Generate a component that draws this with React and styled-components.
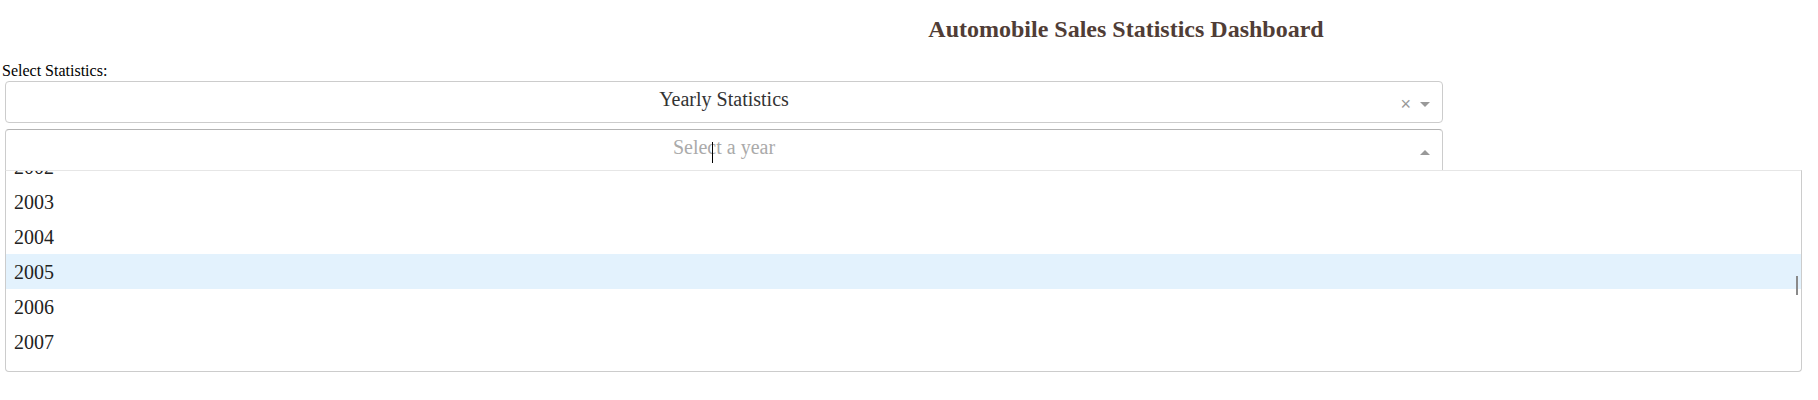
import React, { useLayoutEffect, useRef } from 'react';
import styled, { createGlobalStyle } from 'styled-components';

const GlobalStyle = createGlobalStyle`
  body {
    margin: 0;
    background: #fff;
    font-family: "Liberation Serif", "Times New Roman", serif;
  }
`;

const Page = styled.div`
  display: flex;
  flex-direction: column;
  align-items: flex-start;
`;

const Title = styled.h1`
  align-self: stretch;
  margin: 0;
  padding: 15px 0 0 434px;
  text-align: center;
  font-size: 24px;
  line-height: 28px;
  font-weight: bold;
  color: #503D36;
`;

const Label = styled.label`
  display: block;
  margin-top: 19px;
  padding-left: 2px;
  font-size: 16px;
  line-height: 18px;
  color: #000;
`;

const Control = styled.div`
  display: grid;
  grid-template-columns: 1fr auto;
  box-sizing: border-box;
  width: 1438px;
  height: 42px;
  margin: ${(p) => p.$mt}px 0 0 5px;
  border: 1px solid #ccc;
  border-color: ${(p) => (p.$open ? '#b3b3b3 #ccc #d9d9d9' : '#ccc')};
  border-radius: ${(p) => (p.$open ? '4px 4px 0 0' : '4px')};
  background: #fff;
  font-size: 20px;
`;

const Value = styled.div`
  grid-column: 1 / -1;
  grid-row: 1;
  text-align: center;
  line-height: 34px;
  color: ${(p) => (p.$placeholder ? '#aaa' : '#333')};
`;

const InputLayer = styled.div`
  grid-column: 1 / -1;
  grid-row: 1;
  display: flex;
  justify-content: center;
  align-items: flex-start;
`;

const Caret = styled.span`
  width: 1px;
  height: 21px;
  margin: 12px 24px 0 0;
  background: #000;
`;

const Indicators = styled.div`
  grid-column: 2;
  grid-row: 1;
  display: flex;
  align-items: center;
  gap: 9px;
  padding: 4px 12px 0 0;
`;

const Clear = styled.span`
  font-family: "Liberation Sans", Arial, sans-serif;
  font-size: 18px;
  line-height: 1;
  color: #999;
`;

const Arrow = styled.span`
  width: 0;
  height: 0;
  border-left: 5px solid transparent;
  border-right: 5px solid transparent;
  border-top: ${(p) => (p.$up ? '0' : '5px solid #999')};
  border-bottom: ${(p) => (p.$up ? '5px solid #999' : '0')};
`;

const Menu = styled.div`
  position: relative;
  box-sizing: border-box;
  width: 1797px;
  height: 202px;
  margin: -1px 0 0 5px;
  border: 1px solid #ccc;
  border-top-color: #e6e6e6;
  border-radius: 0 0 4px 4px;
  background: #fff;
  font-size: 20px;
`;

const MenuList = styled.div`
  height: 196px;
  overflow-y: auto;
  scrollbar-width: none;
  &::-webkit-scrollbar {
    display: none;
  }
`;

const Option = styled.div`
  height: 35px;
  box-sizing: border-box;
  padding: 9px 8px 7px;
  line-height: 19px;
  color: #222;
  background: ${(p) => (p.$focused ? '#e3f2fd' : '#fff')};
`;

const Thumb = styled.div`
  position: absolute;
  top: 105px;
  right: 3px;
  width: 2px;
  height: 19px;
  background: #8a8a8a;
`;

const years = Array.from({ length: 44 }, (_, i) => 1980 + i);

const App = () => {
  const listRef = useRef(null);

  useLayoutEffect(() => {
    if (listRef.current) listRef.current.scrollTop = 22 * 35 + 22;
  }, []);

  return (
    <>
      <GlobalStyle />
      <Page>
        <Title>Automobile Sales Statistics Dashboard</Title>
        <Label>Select Statistics:</Label>
        <Control $mt={1}>
          <Value>Yearly Statistics</Value>
          <Indicators>
            <Clear>×</Clear>
            <Arrow />
          </Indicators>
        </Control>
        <Control $mt={6} $open>
          <Value $placeholder>Select a year</Value>
          <InputLayer>
            <Caret />
          </InputLayer>
          <Indicators>
            <Arrow $up />
          </Indicators>
        </Control>
        <Menu>
          <MenuList ref={listRef}>
            {years.map((y) => (
              <Option key={y} $focused={y === 2005}>{y}</Option>
            ))}
          </MenuList>
          <Thumb />
        </Menu>
      </Page>
    </>
  );
};

export default App;
